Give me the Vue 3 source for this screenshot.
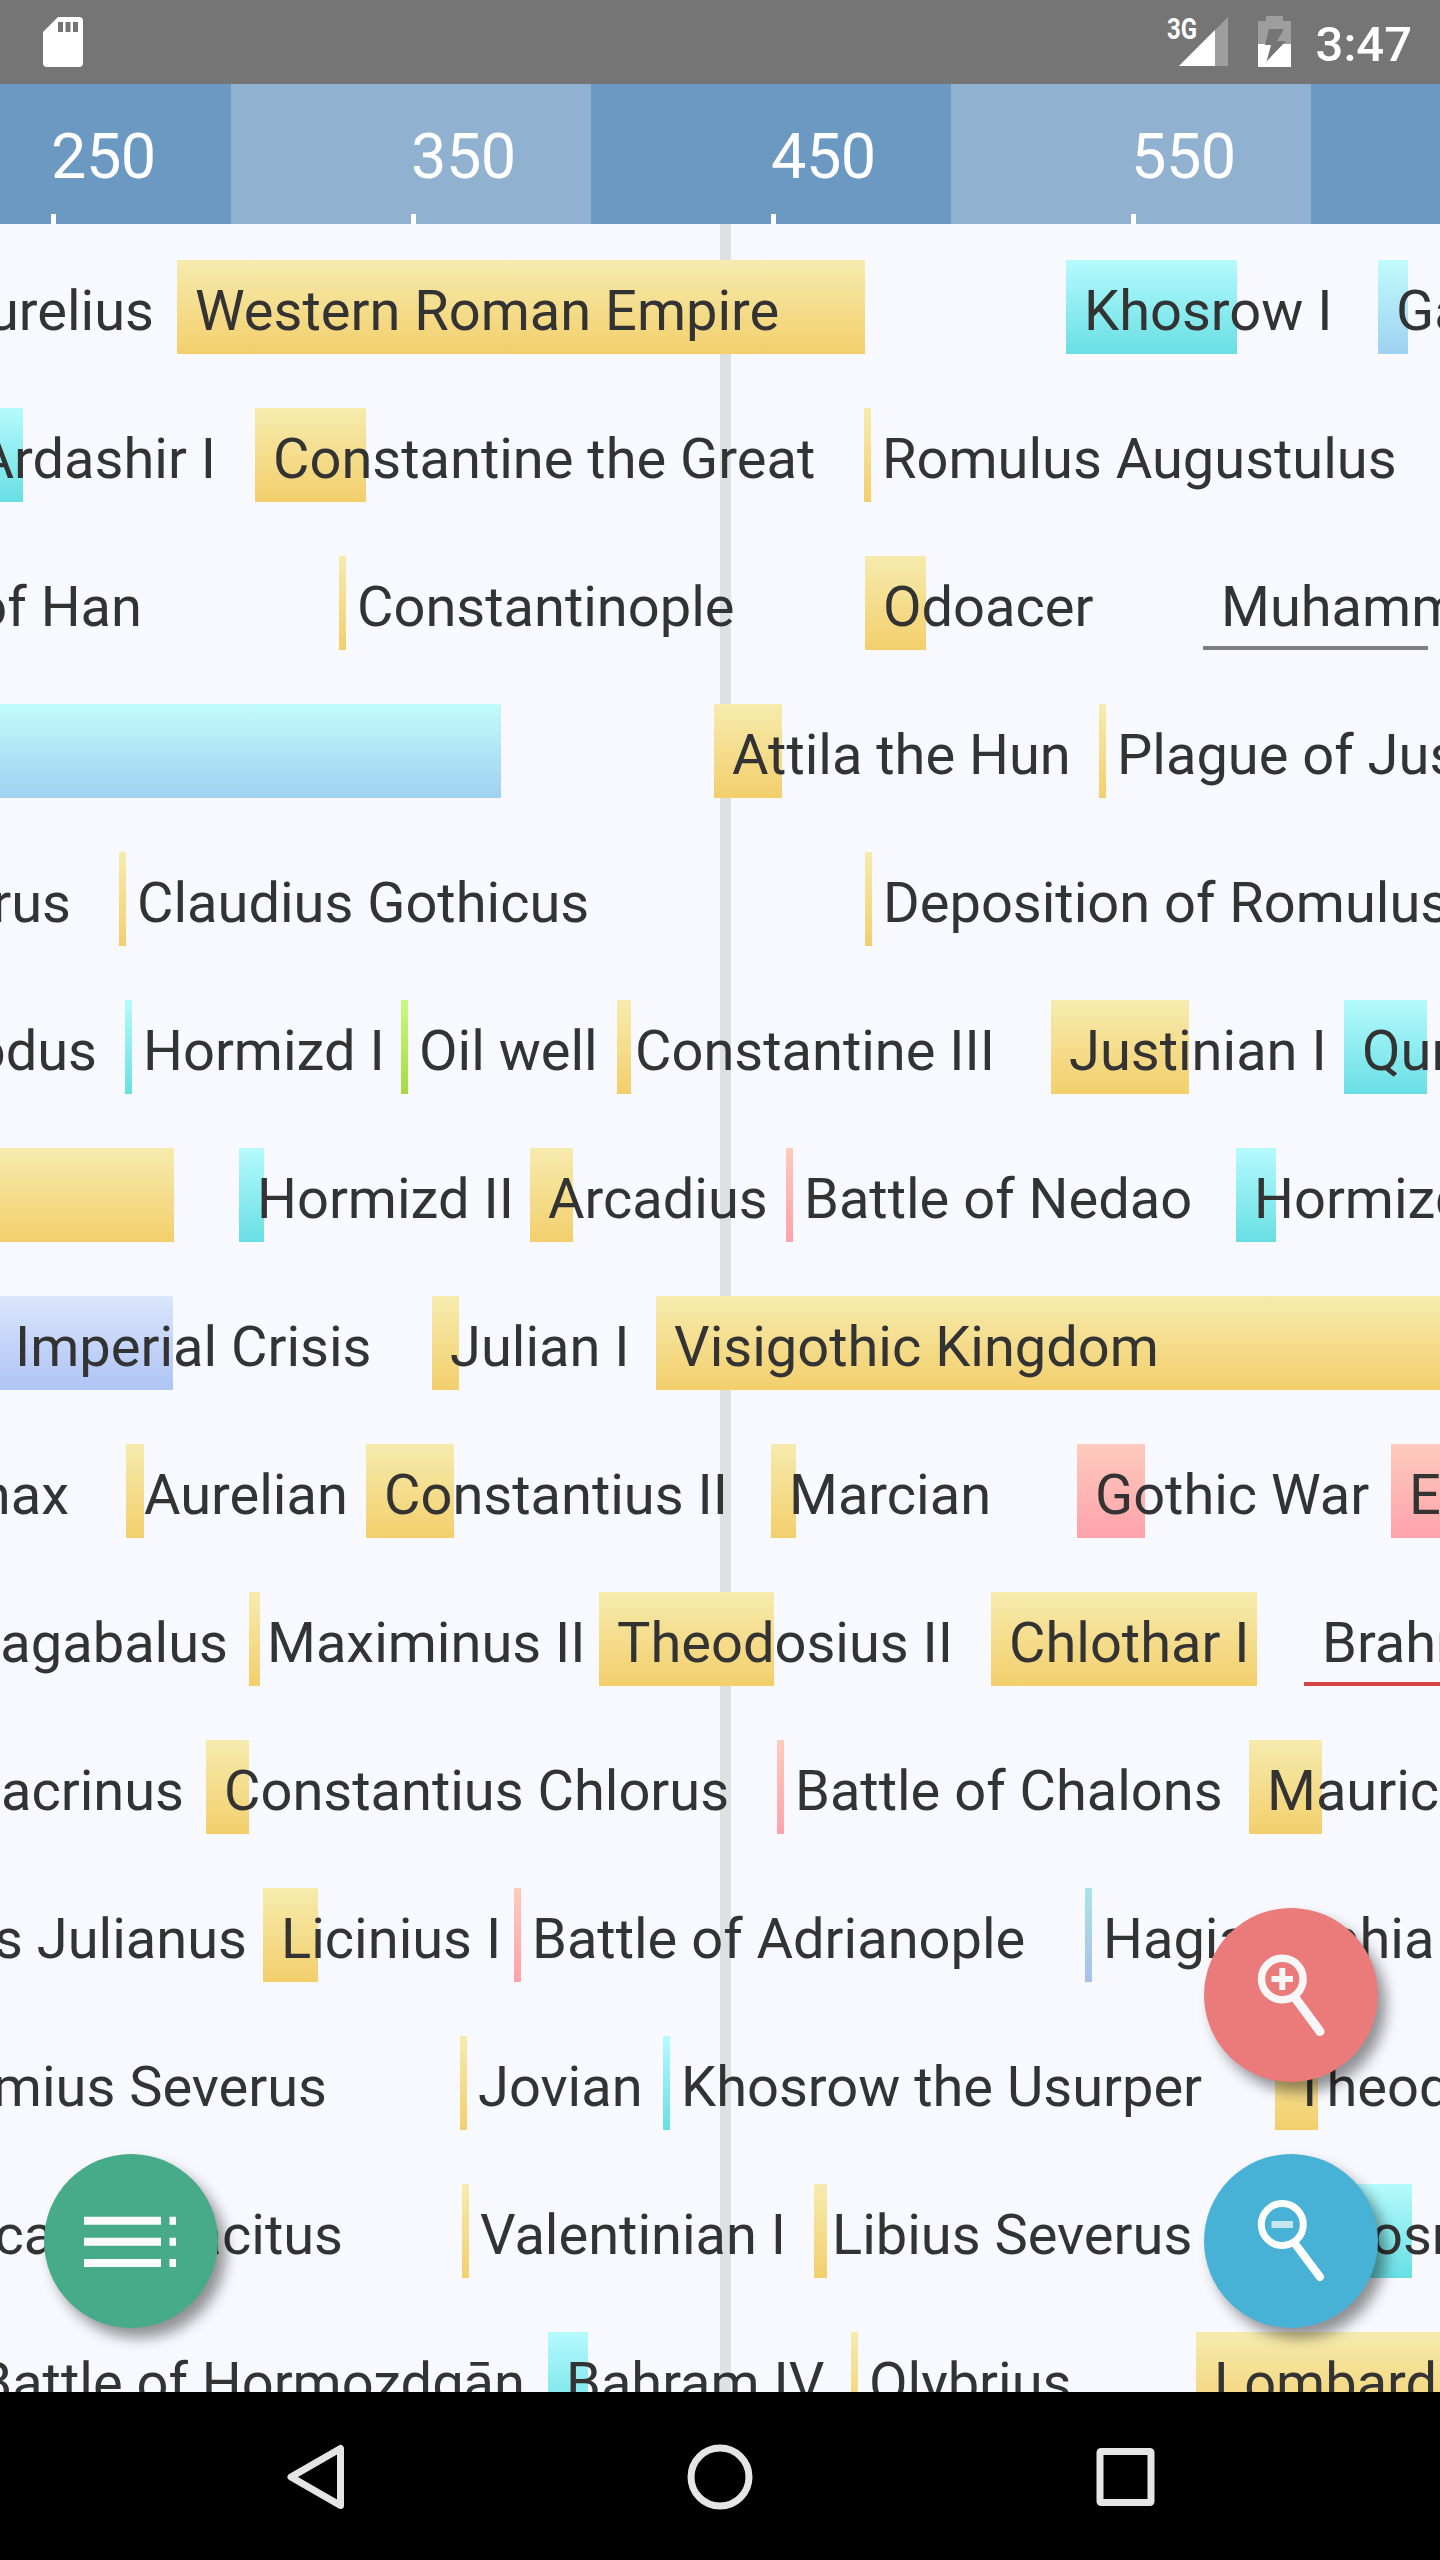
<template>
  <div class="screen">

    <!-- Status bar -->
    <div class="status">
      <svg class="status__sd" width="40" height="50" viewBox="0 0 40 50">
        <path fill="#fff" fill-rule="evenodd" d="M15 0H36Q40 0 40 4V46Q40 50 36 50H4Q0 50 0 46V15ZM15 5V15H20V5ZM22.500 5V15H27.500V5ZM30 5V15H35V5Z" />
      </svg>
      <div class="status__right">
        <span class="status__net">3G</span>
        <svg class="status__signal" width="49" height="49" viewBox="0 0 49 49">
          <path fill="#9e9e9e" d="M0 49L49 0V49Z" />
          <path fill="#fff" d="M0 49L36 13V49Z" />
        </svg>
        <svg class="status__battery" width="33" height="51" viewBox="0 0 33 51">
          <path fill="#9e9e9e" d="M8 0H25V5H33V28H0V5H8Z" />
          <path fill="#fff" d="M0 28H33V51H0Z" />
          <path fill="#757575" d="M11 13H26L19 25H28L8.500 45.500L13 29H7Z" />
        </svg>
        <span class="status__time">3:47</span>
      </div>
    </div>

    <!-- Year ruler -->
    <div class="ruler">
      <div v-for="band in bands" :key="band.key" class="ruler__band" :class="{ light: band.light }" :style="{ width: band.width + 'px' }">
        <span v-if="band.year" class="ruler__year">{{ band.year }}</span>
      </div>
    </div>

    <!-- Timeline -->
    <div class="timeline">
      <div class="timeline__now"></div>
      <div v-for="(row, r) in rows" :key="'row-' + r" class="row">
        <template v-for="(item, i) in row" :key="r + '-' + i">
          <div v-if="item.color" class="bar" :class="'bar--' + item.color" :style="{ left: item.x + 'px', width: item.w + 'px' }"></div>
          <span v-if="item.label" class="label" :style="labelStyle(item)">{{ item.label }}</span>
        </template>
      </div>
    </div>

    <!-- Floating buttons -->
    <button class="fab fab--menu" aria-label="Menu">
      <svg width="174" height="174" viewBox="0 0 174 174">
        <path stroke="#fafafa" stroke-width="8" d="M40 66.700H117M40 87.700H117M40 109H117M125.500 66.700H132M125.500 87.700H132M125.500 109H132" />
      </svg>
    </button>
    <button class="fab fab--in" aria-label="Zoom in">
      <svg width="174" height="174" viewBox="0 0 174 174" fill="none" stroke="#f8f6f6">
        <circle cx="78.300" cy="71" r="20.800" stroke-width="7.500" />
        <path stroke-width="6" d="M67.500 71H89M78.300 60V82" />
        <path stroke-width="9" stroke-linecap="round" d="M92 91L116 123.500" />
      </svg>
    </button>
    <button class="fab fab--out" aria-label="Zoom out">
      <svg width="174" height="174" viewBox="0 0 174 174" fill="none" stroke="#fff">
        <circle cx="78.300" cy="70.500" r="21" stroke-width="7" />
        <path stroke="#c5e5f1" stroke-width="7" d="M67.500 70.500H89" />
        <path stroke-width="8" stroke-linecap="round" d="M92 91L116 123" />
      </svg>
    </button>

    <!-- Navigation bar -->
    <div class="nav">
      <svg width="66" height="66" viewBox="0 0 66 66">
        <path d="M58.500 4.500V61.500L9 33Z" />
      </svg>
      <svg width="66" height="66" viewBox="0 0 66 66">
        <circle cx="33" cy="33" r="29" />
      </svg>
      <svg width="66" height="66" viewBox="0 0 66 66">
        <rect x="8" y="7.500" width="51" height="51" rx="1" />
      </svg>
    </div>

  </div>
</template>

<script setup>
// Ruler: one band per century, alternating shades
const bands = [
  { key: 'a', width: 231, year: 250 },
  { key: 'b', width: 360, year: 350, light: true },
  { key: 'c', width: 360, year: 450 },
  { key: 'd', width: 360, year: 550, light: true },
  { key: 'e', width: 129 }
]

const bar = (x, w, color, label) => ({ x, w, color, label })
// events that begin before the visible range are placed by their right end
const past = (end, label) => ({ end, label })

const rows = [
  [
    past(154, 'Marcus Aurelius'),
    bar(177, 688, 'gold', 'Western Roman Empire'),
    bar(1066, 171, 'cyan', 'Khosrow I'),
    bar(1378, 30, 'sky', 'Gaozu of Tang')
  ],
  [
    bar(-40, 63, 'cyan'),
    past(216, 'Ardashir I'),
    bar(255, 111, 'gold', 'Constantine the Great'),
    bar(864, 7, 'gold', 'Romulus Augustulus')
  ],
  [
    past(142, 'Emperor Xian of Han'),
    bar(339, 7, 'gold', 'Constantinople'),
    bar(865, 61, 'gold', 'Odoacer'),
    bar(1203, 225, 'line-gray', 'Muhammad')
  ],
  [
    bar(-20, 521, 'sky'),
    bar(714, 68, 'gold', 'Attila the Hun'),
    bar(1099, 7, 'gold', 'Plague of Justinian')
  ],
  [
    past(71, 'Lucius Verus'),
    bar(119, 7, 'gold', 'Claudius Gothicus'),
    bar(865, 7, 'gold', 'Deposition of Romulus')
  ],
  [
    past(97, 'Commodus'),
    bar(125, 7, 'cyan', 'Hormizd I'),
    bar(401, 7, 'green', 'Oil well'),
    bar(617, 14, 'gold', 'Constantine III'),
    bar(1051, 138, 'gold', 'Justinian I'),
    bar(1344, 83, 'cyan', 'Quran')
  ],
  [
    bar(-20, 194, 'gold'),
    bar(239, 25, 'cyan', 'Hormizd II'),
    bar(530, 43, 'gold', 'Arcadius'),
    bar(786, 7, 'pink', 'Battle of Nedao'),
    bar(1236, 40, 'cyan', 'Hormizd IV')
  ],
  [
    bar(-3, 176, 'blue', 'Imperial Crisis'),
    bar(432, 27, 'gold', 'Julian I'),
    bar(656, 800, 'gold', 'Visigothic Kingdom')
  ],
  [
    past(69, 'Demonax'),
    bar(126, 18, 'gold', 'Aurelian'),
    bar(366, 88, 'gold', 'Constantius II'),
    bar(771, 25, 'gold', 'Marcian'),
    bar(1077, 68, 'pink', 'Gothic War'),
    bar(1391, 60, 'pink', 'Ethiopian War')
  ],
  [
    past(228, 'Elagabalus'),
    bar(249, 11, 'gold', 'Maximinus II'),
    bar(599, 175, 'gold', 'Theodosius II'),
    bar(991, 266, 'gold', 'Chlothar I'),
    bar(1304, 160, 'line-red', 'Brahmagupta')
  ],
  [
    past(184, 'Macrinus'),
    bar(206, 43, 'gold', 'Constantius Chlorus'),
    bar(777, 7, 'pink', 'Battle of Chalons'),
    bar(1249, 73, 'gold', 'Maurice')
  ],
  [
    past(247, 'Didius Julianus'),
    bar(263, 55, 'gold', 'Licinius I'),
    bar(514, 7, 'pink', 'Battle of Adrianople'),
    bar(1085, 7, 'steel', 'Hagia Sophia')
  ],
  [
    past(327, 'Septimius Severus'),
    bar(460, 7, 'gold', 'Jovian'),
    bar(663, 7, 'cyan', 'Khosrow the Usurper'),
    bar(1275, 43, 'gold', 'Theodosius')
  ],
  [
    past(112, 'Caracalla'),
    past(343, 'Tacitus'),
    bar(462, 7, 'gold', 'Valentinian I'),
    bar(814, 13, 'gold', 'Libius Severus'),
    bar(1287, 125, 'cyan', 'Khosrow II')
  ],
  [
    past(525, 'Battle of Hormozdgān'),
    bar(548, 40, 'cyan', 'Bahram IV'),
    bar(851, 7, 'gold', 'Olybrius'),
    bar(1196, 260, 'gold', 'Lombards')
  ]
]

const labelStyle = (item) =>
  item.end !== undefined
    ? { right: 1440 - item.end + 'px' }
    : { left: item.x + 18 + 'px' }
</script>

<style>
body {
  margin: 0;
  background: #000;
}
</style>

<style scoped>
.screen {
  position: relative;
  display: flex;
  flex-direction: column;
  width: 1440px;
  height: 2560px;
  overflow: hidden;
  font-family: Roboto, sans-serif;
  background: #f8f9ff;
}

/* === Status bar === */
.status {
  flex: 0 0 84px;
  box-sizing: border-box;
  padding: 0 28px 0 43px;
  display: flex;
  align-items: center;
  justify-content: space-between;
  background: #757575;
  color: #fff;
}

.status svg {
  display: block;
}

.status__right {
  display: flex;
  height: 84px;
  align-items: flex-start;
}

.status__net {
  width: 12px;
  margin-top: 12px;
  font-size: 30px;
  line-height: 34px;
  font-weight: 700;
  white-space: nowrap;
  transform: scaleX(0.8);
  transform-origin: 0 0;
}

.status__signal {
  margin-top: 17px;
}

.status__battery {
  margin: 16px 25px 0 30px;
}

.status__time {
  margin-top: 16px;
  font-size: 49px;
  line-height: 58px;
  font-weight: 500;
}

/* === Year ruler === */
.ruler {
  flex: 0 0 140px;
  display: flex;
}

.ruler__band {
  position: relative;
  box-sizing: border-box;
  height: 140px;
  display: flex;
  justify-content: flex-end;
  background: #6c99c1;
}

.ruler__band.light {
  background: #90b1d0;
}

.ruler__year {
  width: 180px;
  padding-top: 35px;
  font-size: 63px;
  line-height: 75px;
  letter-spacing: -0.5px;
  color: #fff;
}

.ruler__year::after {
  content: "";
  position: absolute;
  right: 175px;
  bottom: 0;
  width: 5px;
  height: 10px;
  background: #fff;
}

/* === Timeline === */
.timeline {
  position: relative;
  flex: 0 0 2168px;
  box-sizing: border-box;
  padding-top: 36px;
  overflow: hidden;
}

.timeline__now {
  position: absolute;
  top: 0;
  bottom: 0;
  left: 720px;
  width: 11px;
  background: #dfe0e2;
}

.row {
  position: relative;
  height: 94px;
  margin-bottom: 54px;
}

.bar {
  position: absolute;
  top: 0;
  height: 94px;
}

.bar--gold { background: linear-gradient(#f6ebae, #f3cf6c); }
.bar--cyan { background: linear-gradient(#b5fafd, #68dfe4); }
.bar--sky { background: linear-gradient(#c0fbfc, #9fd1f0); }
.bar--blue { background: linear-gradient(#dbe6fc, #aec4f5); }
.bar--pink { background: linear-gradient(#fecbbd, #fea2ab); }
.bar--green { background: linear-gradient(#c8fa7f, #a8d840); }
.bar--steel { background: linear-gradient(#a9e3e6, #a9c0ea); }

.bar--line-gray,
.bar--line-red {
  top: 90px;
  height: 4px;
  background: #808080;
}

.bar--line-red {
  background: #d64545;
}

.label {
  position: absolute;
  top: 18px;
  font-size: 56px;
  line-height: 66px;
  color: #333;
  white-space: nowrap;
}

/* === Floating buttons === */
.fab {
  position: absolute;
  width: 174px;
  height: 174px;
  padding: 0;
  border: 0;
  border-radius: 50%;
  box-shadow: 8px 10px 14px rgba(0, 0, 0, 0.42);
}

.fab svg {
  display: block;
}

.fab--menu {
  left: 44px;
  top: 2154px;
  background: #47aa88;
}

.fab--in {
  left: 1204px;
  top: 1908px;
  background: #ea7b7a;
}

.fab--out {
  left: 1204px;
  top: 2154px;
  background: #47b1d6;
}

/* === Navigation bar === */
.nav {
  flex: 0 0 168px;
  box-sizing: border-box;
  padding-top: 1px;
  display: flex;
  align-items: center;
  justify-content: center;
  gap: 339px;
  background: #000;
}

.nav svg {
  fill: none;
  stroke: #e5e5e5;
  stroke-width: 7;
  stroke-linejoin: round;
}
</style>
